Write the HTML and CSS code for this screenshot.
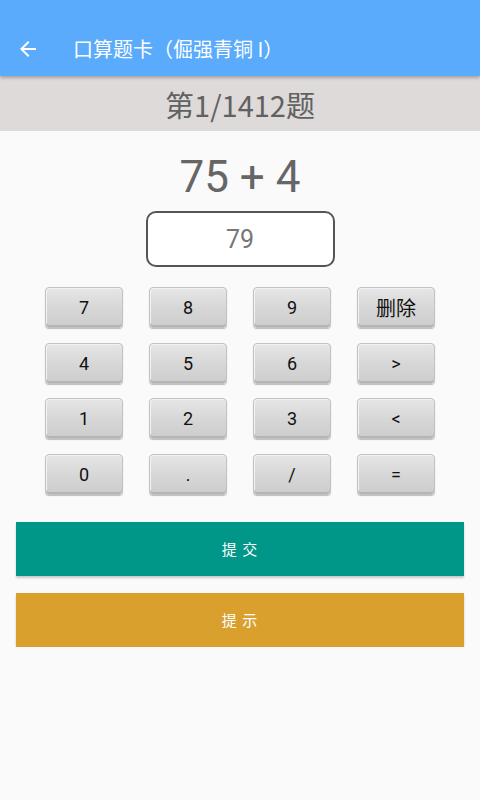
FILE: index.html
```html
<!DOCTYPE html>
<html lang="zh">
<head>
<meta charset="utf-8">
<link rel="stylesheet" href="styles.css">
</head>
<body>
<header class="appbar">
  <svg class="back" width="24" height="24" viewBox="0 0 24 24"><path d="M20 11H7.83l5.59-5.59L12 4l-8 8 8 8 1.41-1.41L7.83 13H20v-2z" fill="#fff"/></svg>
  <span class="title">口算题卡（倔强青铜 I）</span>
</header>
<div class="band">第1/1412题</div>
<main class="content">
  <div class="problem">75 + 4</div>
  <div class="answer">79</div>
  <div class="keypad">
    <div class="key">7</div><div class="key">8</div><div class="key">9</div><div class="key cn">删除</div>
    <div class="key">4</div><div class="key">5</div><div class="key">6</div><div class="key">&gt;</div>
    <div class="key">1</div><div class="key">2</div><div class="key">3</div><div class="key">&lt;</div>
    <div class="key">0</div><div class="key">.</div><div class="key">/</div><div class="key">=</div>
  </div>
  <div class="action submit">提 交</div>
  <div class="action hint">提 示</div>
</main>
</body>
</html>
```
FILE: styles.css
```css
html, body {
  margin: 0;
  padding: 0;
  background: #fafafa;
  font-family: Roboto, "Noto Sans CJK SC", sans-serif;
}
.appbar {
  height: 76px;
  background: #5aabfb;
  display: flex;
  align-items: center;
  padding: 22px 0 0 16px;
  box-sizing: border-box;
  box-shadow: 0 2px 3px rgba(0,0,0,0.25);
  position: relative;
  z-index: 1;
}
.back { flex: none; }
.title {
  margin-left: 33px;
  color: #fff;
  font-size: 20px;
  font-family: "Noto Sans CJK SC", sans-serif;
  line-height: 1;
}
.band {
  height: 55px;
  background: #dedad9;
  color: #616161;
  font-size: 29px;
  font-family: "Noto Sans CJK SC", sans-serif;
  display: flex;
  align-items: center;
  justify-content: center;
}
.content {
  display: flex;
  flex-direction: column;
  align-items: center;
  padding-top: 18px;
}
.problem {
  height: 56px;
  line-height: 56px;
  font-size: 44px;
  color: #666;
}
.answer {
  margin-top: 6px;
  width: 189px;
  height: 56px;
  box-sizing: border-box;
  border: 2px solid #555;
  border-radius: 10px;
  background: #fff;
  color: #777;
  font-size: 25px;
  display: flex;
  align-items: center;
  justify-content: center;
}
.keypad {
  margin-top: 20px;
  display: grid;
  grid-template-columns: repeat(4, 78px);
  grid-auto-rows: 41px;
  column-gap: 26px;
  row-gap: 14.5px;
}
.key {
  box-sizing: border-box;
  border-radius: 4px;
  background: linear-gradient(180deg, #e6e6e6 0%, #d6d6d6 55%, #cdcdcd 100%);
  border: 1px solid #c2c2c2;
  box-shadow: inset 0 -2px 0 #b5b5b5, inset 1px 1px 0 #f2f2f2, 0 1px 1px rgba(0,0,0,0.25);
  display: flex;
  align-items: center;
  justify-content: center;
  font-size: 18px;
  color: #111;
}
.key.cn {
  font-family: "Noto Sans CJK SC", sans-serif;
  font-size: 20px;
}
.action {
  align-self: stretch;
  margin: 0 16px;
  height: 54px;
  display: flex;
  align-items: center;
  justify-content: center;
  color: #fff;
  font-size: 15px;
  font-family: "Noto Sans CJK SC", sans-serif;
  letter-spacing: 1px;
  box-shadow: 0 2px 2px rgba(0,0,0,0.2);
}
.submit {
  margin-top: 27px;
  background: #009688;
}
.hint {
  margin-top: 17px;
  background: #d9a02e;
}
```
